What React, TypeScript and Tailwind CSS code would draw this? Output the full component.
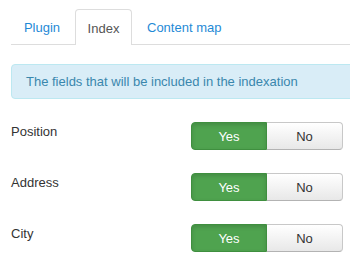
import React from "react";

const rows = ["Position", "Address", "City"];

function Toggle() {
  return (
    <div className="flex h-[28px] w-[152px] text-[13px] leading-[18px]">
      <div className="flex w-[76px] items-center justify-center rounded-l-[4px] border border-[#3f8f3f] bg-[#4fa34f] pt-[1px] text-white shadow-[inset_0_2px_4px_rgba(0,0,0,0.15)]">
        Yes
      </div>
      <div className="flex w-[76px] items-center justify-center rounded-r-[4px] border border-l-0 border-[#c8c8c8] border-b-[#b3b3b3] bg-gradient-to-b from-[#ffffff] to-[#e8e8e8] pt-[1px] text-[#333]">
        No
      </div>
    </div>
  );
}

export default function App() {
  return (
    <div
      className="h-[259px] w-[350px] overflow-hidden bg-white pl-[11px] pt-[9px] text-[13px] text-[#333]"
      style={{ fontFamily: '"Liberation Sans", Arial, sans-serif' }}
    >
      <div className="flex h-[36px] w-[400px] border-b border-[#ddd] leading-[18px]">
        <div className="mr-[2px] flex h-[35px] w-[62px] items-center justify-center pt-[3px] text-[#1f8ad6]">
          Plugin
        </div>
        <div className="mr-[2px] -mb-px flex h-[36px] w-[57px] items-center justify-center rounded-t-[4px] border border-b-0 border-[#ddd] bg-white pt-[2px] text-[#555]">
          Index
        </div>
        <div className="flex h-[35px] items-center px-[13px] pt-[3px] text-[#1f8ad6]">
          Content map
        </div>
      </div>

      <div className="mt-[19px] flex h-[35px] w-[400px] items-center rounded-[4px] border border-[#bce8f1] bg-[#d9edf7] pl-[14px] pt-[1px] leading-[18px] text-[#3a87ad]">
        The fields that will be included in the indexation
      </div>

      <div className="mt-[23px] flex flex-col gap-[23px]">
        {rows.map((r) => (
          <div key={r} className="flex h-[28px]">
            <div className="w-[180px] pt-[1px] leading-[18px]">{r}</div>
            <Toggle />
          </div>
        ))}
      </div>
    </div>
  );
}
